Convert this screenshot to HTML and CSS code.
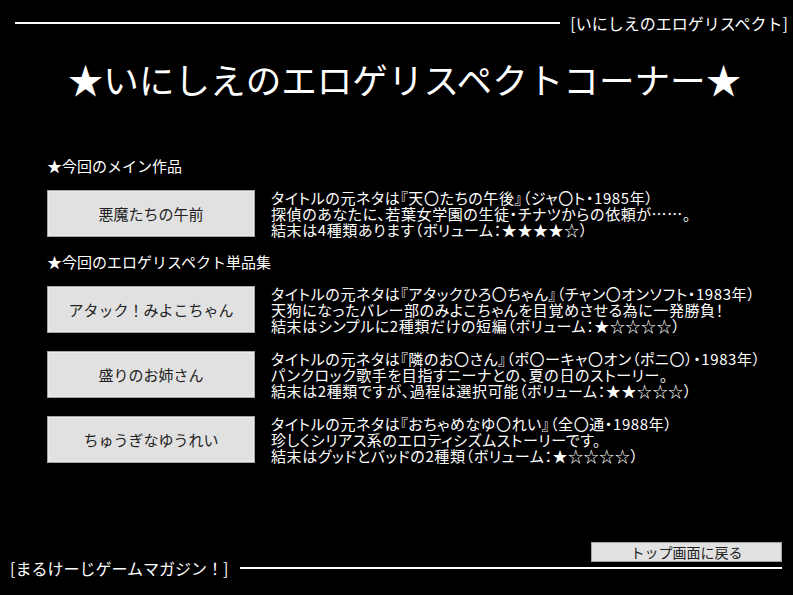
FILE: index.html
```html
<!DOCTYPE html>
<html lang="ja">
<head>
<meta charset="utf-8">
<title>いにしえのエロゲリスペクトコーナー</title>
<link rel="stylesheet" href="styles.css">
</head>
<body>
<div class="page">
  <header class="top-bar">
    <div class="rule"></div>
    <div class="bar-label">[いにしえのエロゲリスペクト]</div>
  </header>

  <h1 class="title">★いにしえのエロゲリスペクトコーナー★</h1>

  <main class="content">
    <div class="heading">★今回のメイン作品</div>
    <div class="entry">
      <button class="game-btn">悪魔たちの午前</button>
      <div class="desc">
        <div>タイトルの元ネタは『天〇たちの午後』（ジャ〇ト・1985年）</div>
        <div>探偵のあなたに、若葉女学園の生徒・チナツからの依頼が……。</div>
        <div>結末は4種類あります（ボリューム：★★★★☆）</div>
      </div>
    </div>

    <div class="heading heading-second">★今回のエロゲリスペクト単品集</div>
    <div class="entry">
      <button class="game-btn">アタック！みよこちゃん</button>
      <div class="desc">
        <div>タイトルの元ネタは『アタックひろ〇ちゃん』（チャン〇オンソフト・1983年）</div>
        <div>天狗になったバレー部のみよこちゃんを目覚めさせる為に一発勝負！</div>
        <div>結末はシンプルに2種類だけの短編（ボリューム：★☆☆☆☆）</div>
      </div>
    </div>
    <div class="entry entry-gap">
      <button class="game-btn">盛りのお姉さん</button>
      <div class="desc">
        <div>タイトルの元ネタは『隣のお〇さん』（ポ〇ーキャ〇オン（ポニ〇）・1983年）</div>
        <div>パンクロック歌手を目指すニーナとの、夏の日のストーリー。</div>
        <div>結末は2種類ですが、過程は選択可能（ボリューム：★★☆☆☆）</div>
      </div>
    </div>
    <div class="entry entry-gap">
      <button class="game-btn">ちゅうぎなゆうれい</button>
      <div class="desc">
        <div>タイトルの元ネタは『おちゃめなゆ〇れい』（全〇通・1988年）</div>
        <div>珍しくシリアス系のエロティシズムストーリーです。</div>
        <div>結末はグッドとバッドの2種類（ボリューム：★☆☆☆☆）</div>
      </div>
    </div>
  </main>

  <div class="back-row">
    <button class="back-btn">トップ画面に戻る</button>
  </div>
  <footer class="bottom-bar">
    <div class="bar-label">[まるけーじゲームマガジン！]</div>
    <div class="rule"></div>
  </footer>
</div>
</body>
</html>
```

FILE: styles.css
```css
html, body {
  margin: 0;
  padding: 0;
  background: #000;
}

body {
  color: #fff;
  font-family: "Noto Sans CJK JP", "Noto Sans", sans-serif;
}

.page {
  width: 793px;
  height: 595px;
  display: flex;
  flex-direction: column;
  overflow: hidden;
}

.top-bar {
  display: flex;
  align-items: center;
  padding: 14px 5px 0 15px;
  height: 18px;
  gap: 10px;
}

.rule {
  flex: 1;
  height: 2px;
  background: #fff;
}

.bar-label {
  font-size: 16px;
  line-height: 18px;
  white-space: nowrap;
}

.title {
  margin: 25px 0 0;
  padding-left: 16px;
  text-align: center;
  font-size: 35.6px;
  line-height: 44px;
  font-weight: 400;
  white-space: nowrap;
}

.content {
  padding-left: 47px;
  margin-top: 55px;
}

.heading {
  font-size: 15px;
  line-height: 20px;
  margin-bottom: 14px;
}

.heading-second {
  margin-top: 14px;
}

.entry {
  display: flex;
  align-items: flex-start;
  gap: 16px;
}

.entry-gap {
  margin-top: 17px;
}

.game-btn {
  width: 208px;
  height: 47px;
  flex: none;
  box-sizing: border-box;
  background: #e1e1e1;
  border: 1px solid #a3a3a3;
  box-shadow: inset 0 0 0 1px #ececec;
  color: #222;
  font-family: "Noto Sans CJK JP", sans-serif;
  font-size: 15px;
  padding: 0;
}

.desc {
  font-size: 15px;
  line-height: 16px;
  letter-spacing: 0.6px;
  white-space: nowrap;
  font-feature-settings: "palt";
}

.back-row {
  margin-top: auto;
  display: flex;
  justify-content: flex-end;
  padding-right: 11px;
}

.back-btn {
  width: 191px;
  height: 20px;
  box-sizing: border-box;
  background: #e1e1e1;
  border: 1px solid #a3a3a3;
  color: #222;
  font-family: "Noto Sans CJK JP", sans-serif;
  font-size: 14px;
  line-height: 16px;
  padding: 0;
}

.bottom-bar {
  display: flex;
  align-items: center;
  height: 14px;
  margin: -1px 0 20px;
  padding: 0 11px 0 10px;
  gap: 12px;
}

.bottom-bar .bar-label {
  line-height: 14px;
}
```
